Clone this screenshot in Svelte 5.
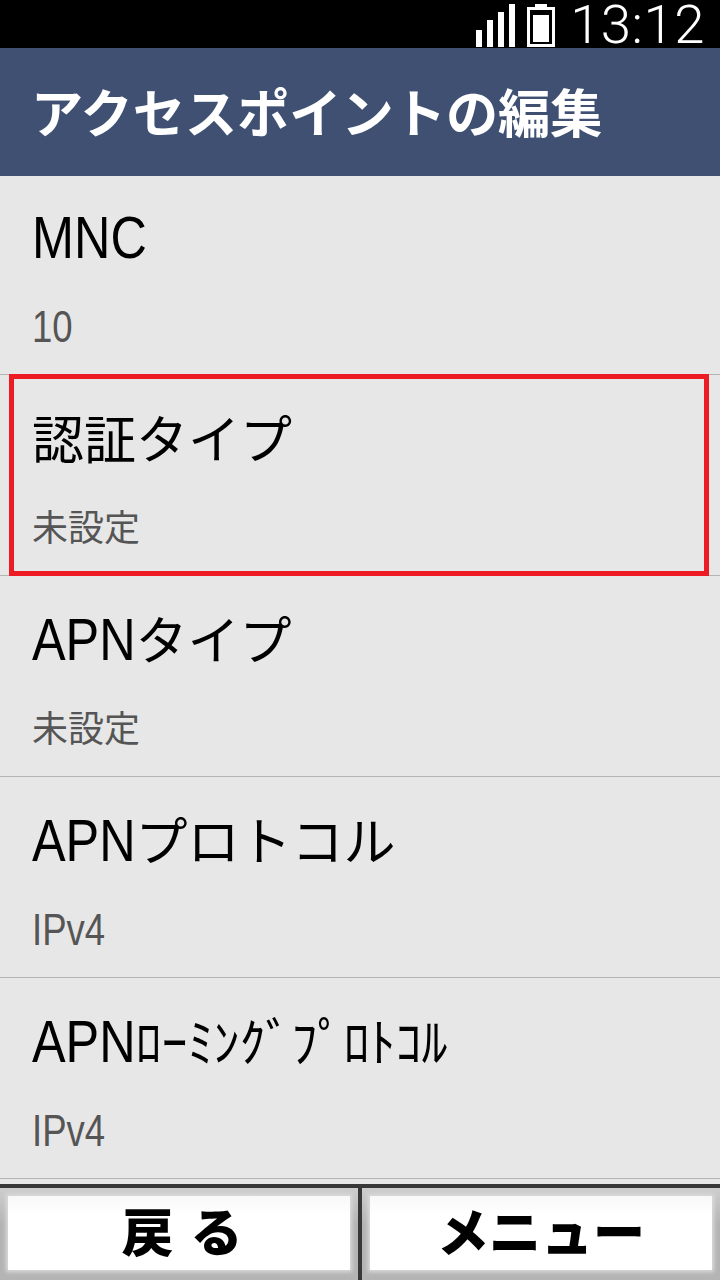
<script>
  const rows = [
    { latin: 'MNC', kana: '', latinValue: '10', value: '' },
    { latin: '', kana: '認証タイプ', latinValue: '', value: '未設定', selected: true },
    { latin: 'APN', kana: 'タイプ', latinValue: '', value: '未設定' },
    { latin: 'APN', kana: 'プロトコル', latinValue: 'IPv4', value: '' },
    { latin: 'APN', kana: 'ﾛｰﾐﾝｸﾞﾌﾟﾛﾄｺﾙ', latinValue: 'IPv4', value: '' }
  ];
</script>

<div class="screen">
  <div class="status">
    <svg class="icons" width="80" height="46" viewBox="0 0 80 46" aria-hidden="true">
      <g fill="#fff">
        <rect x="0" y="28" width="6" height="17" />
        <rect x="11" y="18" width="6" height="27" />
        <rect x="22" y="10" width="6" height="35" />
        <rect x="33" y="2" width="6" height="43" />
        <rect x="59" y="2" width="12" height="4" />
      </g>
      <rect x="52.5" y="6.5" width="25" height="37" fill="#000" stroke="#fff" stroke-width="3" />
      <rect x="57" y="13" width="16" height="27" fill="#fff" />
    </svg>
    <span class="time">13:12</span>
  </div>
  <header class="title">アクセスポイントの編集</header>
  <main class="list">
    {#each rows as row}
      <div class="row" class:selected={row.selected}>
        <div class="name">{#if row.latin}<span class="latin">{row.latin}</span>{/if}{row.kana}</div>
        <div class="value">{#if row.latinValue}<span class="latin">{row.latinValue}</span>{/if}{row.value}</div>
      </div>
    {/each}
  </main>
  <footer class="footer">
    <button class="btn"><span class="face back">戻 る</span></button>
    <button class="btn"><span class="face">メニュー</span></button>
  </footer>
</div>

<style>
  :global(body) {
    margin: 0;
    background: #e7e7e7;
  }
  .screen {
    width: 720px;
    height: 1280px;
    display: flex;
    flex-direction: column;
    overflow: hidden;
    font-family: "Noto Sans CJK JP", sans-serif;
    background: #e7e7e7;
  }
  .status {
    height: 48px;
    background: #000;
    display: flex;
    align-items: center;
    justify-content: flex-end;
    padding-right: 15px;
    gap: 14px;
    color: #fff;
  }
  .icons {
    display: block;
    margin-top: 1px;
  }
  .time {
    font-family: Roboto, sans-serif;
    font-weight: 300;
    font-size: 54.5px;
    line-height: 48px;
    letter-spacing: 0.5px;
  }
  .title {
    height: 128px;
    box-sizing: border-box;
    padding: 0 0 5px 31px;
    display: flex;
    align-items: center;
    background: #3f5072;
    color: #fff;
    font-size: 52.2px;
    font-weight: 700;
  }
  .list {
    flex: 1;
    display: flex;
    flex-direction: column;
  }
  .row {
    height: 201px;
    flex: none;
    box-sizing: border-box;
    border-bottom: 1px solid #b4b4b4;
    padding: 30px 0 0 32px;
    position: relative;
  }
  .row:first-child {
    height: 199px;
    padding-top: 28px;
  }
  .row.selected::after {
    content: "";
    position: absolute;
    left: 9px;
    right: 11px;
    top: -1px;
    bottom: -1px;
    border: 5px solid #ed1c24;
  }
  .name {
    font-size: 52px;
    line-height: 64px;
    height: 64px;
    color: #000;
    white-space: pre;
  }
  .name .latin {
    font-size: 60px;
    transform: scaleX(0.84);
    margin-right: -0.33em;
  }
  .value {
    font-size: 36px;
    line-height: 44px;
    height: 44px;
    margin-top: 34px;
    color: #555;
  }
  .value .latin {
    font-size: 44px;
    transform: translateY(2px) scaleX(0.83);
  }
  .latin {
    display: inline-block;
    transform-origin: left center;
    font-family: "Liberation Sans", sans-serif;
  }
  .footer {
    height: 96px;
    flex: none;
    box-sizing: border-box;
    border-top: 4px solid #383838;
    display: grid;
    grid-template-columns: 358px 1fr;
    background: #b8b8b8;
  }
  .btn {
    appearance: none;
    margin: 0;
    padding: 8px 8px 10px;
    border: none;
    background: linear-gradient(#cdcdcd, #b4b4b4 40%);
    display: flex;
    font-family: inherit;
  }
  .btn + .btn {
    border-left: 4px solid #383838;
  }
  .face {
    flex: 1;
    background: linear-gradient(#f8f8f8, #fff 25%);
    box-shadow: 0 0 4px 2px #dcdcdc;
    font-weight: 900;
    font-size: 52px;
    line-height: 1;
    color: #000;
    display: flex;
    align-items: center;
    justify-content: center;
    padding-bottom: 6px;
    box-sizing: border-box;
    white-space: pre;
  }
  .back {
    word-spacing: 5px;
    padding-left: 6px;
  }
</style>
